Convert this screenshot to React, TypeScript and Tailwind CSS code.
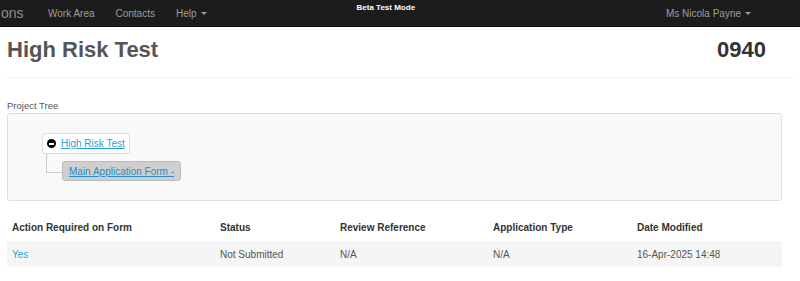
import React from "react";

const navLinks = ["Work Area", "Contacts"];

const columns = [
  { label: "Action Required on Form", width: "w-[208px]" },
  { label: "Status", width: "w-[120px]" },
  { label: "Review Reference", width: "w-[153px]" },
  { label: "Application Type", width: "w-[144px]" },
  { label: "Date Modified", width: "flex-1" },
];

function Caret() {
  return <span className="ml-1 inline-block border-x-[3px] border-t-[3px] border-x-transparent border-t-current align-middle" />;
}

export default function App() {
  return (
    <div className="h-[281px] w-[800px] overflow-hidden bg-white font-['Liberation_Sans',Arial,sans-serif]">
      <header className="flex h-[27px] items-center border-b border-[#0a0a0a] bg-[#1c1c1c] text-[10px] text-[#9d9d9d]">
        <span className="ml-[1px] w-[47px] text-[14px] leading-none text-[#8f8f8f]">ons</span>
        <nav className="flex items-center gap-[21px]">
          {navLinks.map((l) => (
            <span key={l}>{l}</span>
          ))}
          <span className="flex items-center">
            Help
            <Caret />
          </span>
        </nav>
        <span className="ml-[150px] self-start pt-[2px] text-[8px] font-bold text-white">Beta Test Mode</span>
        <span className="ml-auto mr-[49px] flex items-center">
          Ms Nicola Payne
          <Caret />
        </span>
      </header>

      <div className="px-[7px]">
        <div className="flex items-center justify-between border-b border-[#f2f2f2] pb-[14px] pt-[10px] pr-[27px]">
          <h1 className="text-[22px] font-bold leading-[26px] text-[#555]">High Risk Test</h1>
          <span className="text-[22px] font-bold leading-[26px] text-[#333]">0940</span>
        </div>

        <p className="mt-[22px] text-[9.5px] leading-[12px] text-[#555]">Project Tree</p>
        <div className="mt-[1px] h-[88px] w-[775px] rounded-[3px] border border-[#dedede] bg-[#f9f9f9] pl-[34px] pt-[19px]">
          <div className="flex">
            <div className="flex h-[21px] items-center gap-[5px] rounded-[3px] border border-[#ddd] bg-white px-[4px]">
              <span className="flex h-[9px] w-[9px] items-center justify-center rounded-full bg-black">
                <span className="h-[2px] w-[5px] bg-white" />
              </span>
              <span className="text-[10px] text-[#2a9fd6] underline">High Risk Test</span>
            </div>
          </div>
          <div className="flex">
            <div className="ml-[4px] h-[19px] w-[16px] border-b border-l border-[#ccc]" />
            <div className="mt-[7px] flex h-[20px] items-center rounded-[3px] border border-[#bbb] bg-[#cfcfcf] px-[6px]">
              <span className="text-[10px] text-[#2a8cc0] underline">Main Application Form -</span>
            </div>
          </div>
        </div>

        <div className="mt-[13px] w-[775px] text-[10px]">
          <div className="flex h-[27px] items-center px-[5px] font-bold text-[#333]">
            {columns.map((c) => (
              <div key={c.label} className={c.width}>
                {c.label}
              </div>
            ))}
          </div>
          <div className="flex h-[26px] items-center bg-[#f5f5f5] px-[5px] text-[#555]">
            <div className="w-[208px] text-[#2a9fd6]">Yes</div>
            <div className="w-[120px]">Not Submitted</div>
            <div className="w-[153px]">N/A</div>
            <div className="w-[144px]">N/A</div>
            <div className="flex-1">16-Apr-2025 14:48</div>
          </div>
        </div>
      </div>
    </div>
  );
}
